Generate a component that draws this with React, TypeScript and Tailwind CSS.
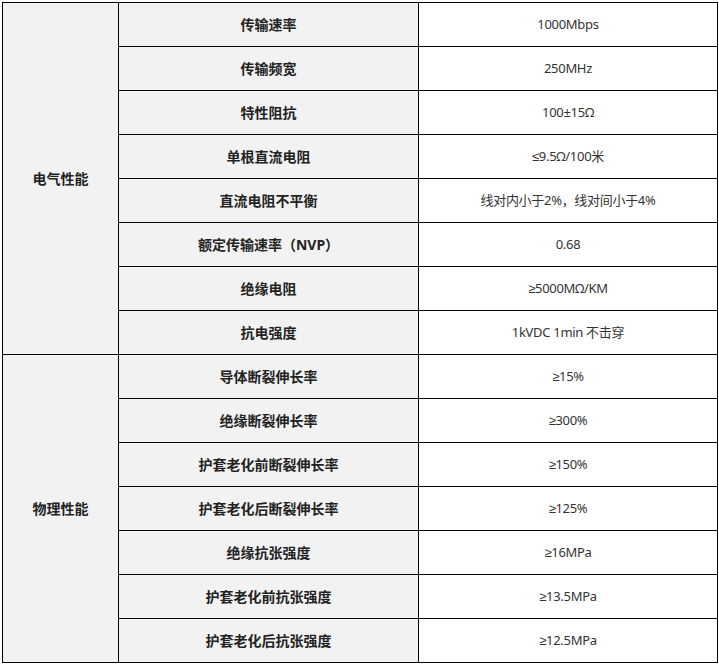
import React from "react";

type Spec = { name: string; value: string };

const groups: { title: string; rows: Spec[] }[] = [
  {
    title: "电气性能",
    rows: [
      { name: "传输速率", value: "1000Mbps" },
      { name: "传输频宽", value: "250MHz" },
      { name: "特性阻抗", value: "100±15Ω" },
      { name: "单根直流电阻", value: "≤9.5Ω/100米" },
      { name: "直流电阻不平衡", value: "线对内小于2%，线对间小于4%" },
      { name: "额定传输速率（NVP）", value: "0.68" },
      { name: "绝缘电阻", value: "≥5000MΩ/KM" },
      { name: "抗电强度", value: "1kVDC 1min 不击穿" },
    ],
  },
  {
    title: "物理性能",
    rows: [
      { name: "导体断裂伸长率", value: "≥15%" },
      { name: "绝缘断裂伸长率", value: "≥300%" },
      { name: "护套老化前断裂伸长率", value: "≥150%" },
      { name: "护套老化后断裂伸长率", value: "≥125%" },
      { name: "绝缘抗张强度", value: "≥16MPa" },
      { name: "护套老化前抗张强度", value: "≥13.5MPa" },
      { name: "护套老化后抗张强度", value: "≥12.5MPa" },
    ],
  },
];

export default function App() {
  return (
    <div
      className="w-[719px] h-[665px] bg-white pt-[2px] pl-[2px]"
      style={{
        fontFamily:
          '"Noto Sans", "Liberation Sans", "Noto Sans CJK SC", sans-serif',
      }}
    >
      <table className="table-fixed border-collapse w-[715px]">
        <colgroup>
          <col className="w-[116px]" />
          <col className="w-[300px]" />
          <col className="w-[299px]" />
        </colgroup>
        <tbody>
          {groups.map((g) =>
            g.rows.map((r, i) => (
              <tr key={g.title + r.name} className="h-[44px]">
                {i === 0 && (
                  <td
                    rowSpan={g.rows.length}
                    className="border border-black bg-[#f2f2f2] text-center align-middle text-[14px] font-bold text-[#222]"
                  >
                    {g.title}
                  </td>
                )}
                <td className="border border-black bg-[#f2f2f2] p-0 text-center text-[14px] font-bold text-[#222]">
                  {r.name}
                </td>
                <td className="border border-black bg-white p-0 text-center text-[13px] tracking-[-0.3px] text-[#333]">
                  {r.value}
                </td>
              </tr>
            ))
          )}
        </tbody>
      </table>
    </div>
  );
}
